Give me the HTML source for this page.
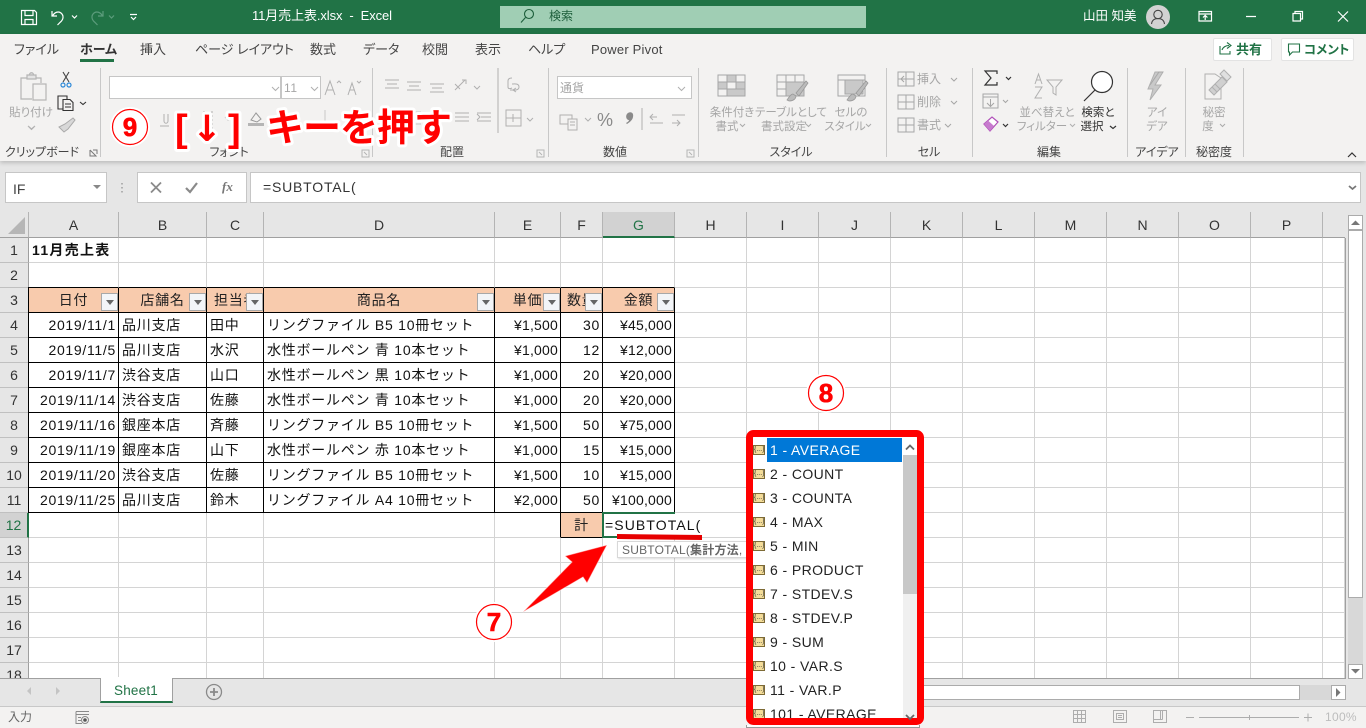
<!DOCTYPE html>
<html lang="ja"><head><meta charset="utf-8"><title>Excel</title>
<style>
html,body{margin:0;padding:0;width:1366px;height:728px;overflow:hidden;background:#e6e6e6}
*{box-sizing:border-box}
body{font-family:"Liberation Sans","Noto Sans CJK JP",sans-serif;position:relative}
.a{position:absolute}
.t{position:absolute;white-space:nowrap;line-height:16px;height:16px}
.c{transform:translateX(-50%);text-align:center}
.tab{font-size:13px;color:#444;top:42px;font-feature-settings:"palt"}
.g{font-size:12px;color:#444;top:144px;font-feature-settings:"palt"}
.d{font-size:11.5px;color:#a6a6a6;font-feature-settings:"palt"}
.sep{position:absolute;top:68px;width:1px;height:89px;background:#c8c8c8}
.hd{position:absolute;top:212px;height:26px;background:#e6e6e6;border-right:1px solid #b4b4b4;border-bottom:1px solid #a0a0a0;text-align:center;font-size:14px;line-height:26px;color:#333}
.rh{position:absolute;left:0;width:29px;height:25px;background:#e6e6e6;border-right:1px solid #9f9f9f;border-bottom:1px solid #c0c0c0;text-align:center;font-size:14px;line-height:25px;color:#333}
table{border-collapse:separate;border-spacing:0;table-layout:fixed;position:absolute;left:0;top:0;width:1316px}
td{height:25px;padding:0 2px 0 3px;border-right:1px solid #d4d4d4;border-bottom:1px solid #d4d4d4;font-size:14px;letter-spacing:.75px;color:#111;white-space:nowrap;overflow:hidden;line-height:23px;background:#fff}
td.b{border-color:#000}
td.bb{border-bottom-color:#000}
td.r{text-align:right;letter-spacing:.7px}
td.y{letter-spacing:.2px}
td.h{background:#f8cbad;text-align:center;color:#222;border-color:#000;padding:0 0 0 0}
.fb{position:absolute;width:17px;height:18px;top:293px;background:#f3f5f8;border:1px solid #a8a8a8}
.fb:after{content:"";position:absolute;left:4px;top:6px;border:4px solid transparent;border-top:5px solid #666;border-bottom:0}
.li{position:absolute;left:770px;font-size:14px;letter-spacing:.4px;color:#222;line-height:24px;height:24px;white-space:nowrap}
.ic{position:absolute;left:754px;width:12px;height:10px;background:#f4dc98;border:1px solid #7d6a35;font-size:7px;line-height:7px;text-align:center;color:#333;overflow:hidden}
</style></head><body>

<!-- title bar -->
<div class="a" style="left:0;top:0;width:1366px;height:34px;background:#217346"></div>
<div class="a" style="left:500px;top:6px;width:366px;height:22px;background:#a0ceb4"></div>
<div class="t" style="left:252px;top:8px;font-size:13px;color:#fff;letter-spacing:-.1px;white-space:pre">11月売上表.xlsx  -  Excel</div>
<div class="t" style="left:549px;top:8px;font-size:12px;color:#1d5e3b">検索</div>
<div class="t" style="left:1083px;top:8px;font-size:12.5px;color:#fff">山田 知美</div>

<!-- ribbon bg -->
<div class="a" style="left:0;top:34px;width:1366px;height:127px;background:#f3f2f1;box-shadow:0 2px 4px rgba(0,0,0,.18)"></div>
<div class="t tab" style="left:14px">ファイル</div>
<div class="t tab" style="left:80px;font-weight:700;color:#333">ホーム</div>
<div class="a" style="left:80px;top:59px;width:34px;height:3px;background:#217346"></div>
<div class="t tab" style="left:140px">挿入</div>
<div class="t tab" style="left:195px">ページ レイアウト</div>
<div class="t tab" style="left:310px">数式</div>
<div class="t tab" style="left:363px">データ</div>
<div class="t tab" style="left:422px">校閲</div>
<div class="t tab" style="left:475px">表示</div>
<div class="t tab" style="left:528px">ヘルプ</div>
<div class="t tab" style="left:591px;letter-spacing:.2px">Power Pivot</div>

<div class="a" style="left:1213px;top:38px;width:59px;height:23px;background:#fff;border:1px solid #e3e3e3;border-radius:2px"></div>
<div class="t" style="left:1236px;top:42px;font-size:13px;font-weight:700;color:#217346">共有</div>
<div class="a" style="left:1281px;top:38px;width:73px;height:23px;background:#fff;border:1px solid #e3e3e3;border-radius:2px"></div>
<div class="t" style="left:1304px;top:42px;font-size:12.5px;font-weight:700;color:#217346;font-feature-settings:'palt'">コメント</div>

<div class="sep" style="left:100px"></div><div class="sep" style="left:372px"></div><div class="sep" style="left:548px"></div><div class="sep" style="left:698px"></div><div class="sep" style="left:886px"></div><div class="sep" style="left:972px"></div><div class="sep" style="left:1127px"></div><div class="sep" style="left:1185px"></div><div class="sep" style="left:1243px"></div>

<div class="t g c" style="left:42px">クリップボード</div>
<div class="t g c" style="left:229px">フォント</div>
<div class="t g c" style="left:452px">配置</div>
<div class="t g c" style="left:615px">数値</div>
<div class="t g c" style="left:791px">スタイル</div>
<div class="t g c" style="left:929px">セル</div>
<div class="t g c" style="left:1049px">編集</div>
<div class="t g c" style="left:1157px">アイデア</div>
<div class="t g c" style="left:1214px">秘密度</div>

<div class="t d c" style="left:31px;top:105px">貼り付け</div>
<div class="a" style="left:109px;top:76px;width:172px;height:23px;background:#fff;border:1px solid #c6c6c6"></div>
<div class="a" style="left:281px;top:76px;width:40px;height:23px;background:#fff;border:1px solid #c6c6c6"></div>
<div class="t" style="left:284px;top:80px;font-size:12px;color:#a6a6a6;letter-spacing:.6px">11</div>
<div class="a" style="left:557px;top:76px;width:135px;height:23px;background:#fff;border:1px solid #c6c6c6"></div>
<div class="t" style="left:560px;top:80px;font-size:12px;color:#a6a6a6">通貨</div>
<div class="t" style="left:597px;top:110px;font-size:18px;color:#8a8a8a;line-height:20px;height:20px">%</div>

<div class="t d c" style="left:732px;top:105px">条件付き</div><div class="t d c" style="left:727px;top:119px">書式</div>
<div class="t d c" style="left:791px;top:105px">テーブルとして</div><div class="t d c" style="left:784px;top:119px">書式設定</div>
<div class="t d c" style="left:851px;top:105px">セルの</div><div class="t d c" style="left:845px;top:119px">スタイル</div>
<div class="t d" style="left:917px;top:71px;font-size:12px">挿入</div>
<div class="t d" style="left:917px;top:94px;font-size:12px">削除</div>
<div class="t d" style="left:917px;top:117px;font-size:12px">書式</div>
<div class="t d c" style="left:1047px;top:105px">並べ替えと</div><div class="t d c" style="left:1042px;top:119px">フィルター</div>
<div class="t d c" style="left:1098px;top:105px;color:#333">検索と</div><div class="t d c" style="left:1092px;top:119px;color:#333">選択</div>
<div class="t d c" style="left:1157px;top:105px">アイ</div><div class="t d c" style="left:1157px;top:119px">デア</div>
<div class="t d c" style="left:1214px;top:105px">秘密</div><div class="t d c" style="left:1208px;top:119px">度</div>

<!-- formula bar -->
<div class="a" style="left:5px;top:172px;width:102px;height:31px;background:#fff;border:1px solid #c6c6c6"></div>
<div class="t" style="left:13px;top:181px;font-size:14px;color:#444">IF</div>
<div class="a" style="left:137px;top:172px;width:110px;height:31px;background:#fff;border:1px solid #c6c6c6"></div>
<div class="a" style="left:250px;top:172px;width:1111px;height:31px;background:#fff;border:1px solid #c6c6c6"></div>
<div class="t" style="left:263px;top:179px;font-size:14px;color:#333;letter-spacing:.8px">=SUBTOTAL(</div>
<div class="t" style="left:222px;top:179px;font-family:'Liberation Serif',serif;font-style:italic;font-weight:700;font-size:13px;color:#777">fx</div>

<!-- column headers -->
<div class="a" style="left:0;top:212px;width:29px;height:26px;background:#e6e6e6;border-right:1px solid #b4b4b4;border-bottom:1px solid #a0a0a0"></div>
<div class="hd" style="left:29px;width:90px">A</div>
<div class="hd" style="left:119px;width:88px">B</div>
<div class="hd" style="left:207px;width:57px">C</div>
<div class="hd" style="left:264px;width:231px">D</div>
<div class="hd" style="left:495px;width:66px">E</div>
<div class="hd" style="left:561px;width:42px">F</div>
<div class="hd" style="left:603px;width:72px;background:#d2d2d2;border-bottom:2px solid #217346;color:#217346">G</div>
<div class="hd" style="left:675px;width:72px">H</div>
<div class="hd" style="left:747px;width:72px">I</div>
<div class="hd" style="left:819px;width:72px">J</div>
<div class="hd" style="left:891px;width:72px">K</div>
<div class="hd" style="left:963px;width:72px">L</div>
<div class="hd" style="left:1035px;width:72px">M</div>
<div class="hd" style="left:1107px;width:72px">N</div>
<div class="hd" style="left:1179px;width:72px">O</div>
<div class="hd" style="left:1251px;width:72px">P</div>
<div class="hd" style="left:1323px;width:22px;border-right:0"></div>

<!-- row headers -->
<div class="a" style="left:0;top:238px;width:29px;height:440px;overflow:hidden">
<div class="rh" style="top:0">1</div><div class="rh" style="top:25px">2</div><div class="rh" style="top:50px">3</div><div class="rh" style="top:75px">4</div><div class="rh" style="top:100px">5</div><div class="rh" style="top:125px">6</div><div class="rh" style="top:150px">7</div><div class="rh" style="top:175px">8</div><div class="rh" style="top:200px">9</div><div class="rh" style="top:225px">10</div><div class="rh" style="top:250px">11</div><div class="rh" style="top:275px;background:#d2d2d2;border-right:2px solid #217346;color:#217346">12</div><div class="rh" style="top:300px">13</div><div class="rh" style="top:325px">14</div><div class="rh" style="top:350px">15</div><div class="rh" style="top:375px">16</div><div class="rh" style="top:400px">17</div><div class="rh" style="top:425px">18</div>
</div>

<!-- grid -->
<div class="a" style="left:29px;top:238px;width:1317px;height:441px;overflow:hidden;background:#fff;border-right:1px solid #a0a0a0;border-bottom:1px solid #a0a0a0">
<table>
<colgroup><col style="width:90px"><col style="width:88px"><col style="width:57px"><col style="width:231px"><col style="width:66px"><col style="width:42px"><col style="width:72px"><col style="width:72px"><col style="width:72px"><col style="width:72px"><col style="width:72px"><col style="width:72px"><col style="width:72px"><col style="width:72px"><col style="width:72px"><col style="width:72px"><col style="width:22px"></colgroup>
<tr><td style="font-weight:700;letter-spacing:1.3px">11月売上表</td><td></td><td></td><td></td><td></td><td></td><td></td><td></td><td></td><td></td><td></td><td></td><td></td><td></td><td></td><td></td><td></td></tr>
<tr><td class="bb"></td><td class="bb"></td><td class="bb"></td><td class="bb"></td><td class="bb"></td><td class="bb"></td><td class="bb"></td><td></td><td></td><td></td><td></td><td></td><td></td><td></td><td></td><td></td><td></td></tr>
<tr><td class="h">日付</td><td class="h">店舗名</td><td class="h" style="text-align:left;padding-left:7px">担当者</td><td class="h">商品名</td><td class="h">単価</td><td class="h" style="text-align:left;padding-left:6px">数量</td><td class="h">金額</td><td></td><td></td><td></td><td></td><td></td><td></td><td></td><td></td><td></td><td></td></tr>
<tr><td class="b r">2019/11/1</td><td class="b">品川支店</td><td class="b">田中</td><td class="b">リングファイル B5 10冊セット</td><td class="b r y">¥1,500</td><td class="b r">30</td><td class="b r y">¥45,000</td><td></td><td></td><td></td><td></td><td></td><td></td><td></td><td></td><td></td><td></td></tr>
<tr><td class="b r">2019/11/5</td><td class="b">品川支店</td><td class="b">水沢</td><td class="b">水性ボールペン 青 10本セット</td><td class="b r y">¥1,000</td><td class="b r">12</td><td class="b r y">¥12,000</td><td></td><td></td><td></td><td></td><td></td><td></td><td></td><td></td><td></td><td></td></tr>
<tr><td class="b r">2019/11/7</td><td class="b">渋谷支店</td><td class="b">山口</td><td class="b">水性ボールペン 黒 10本セット</td><td class="b r y">¥1,000</td><td class="b r">20</td><td class="b r y">¥20,000</td><td></td><td></td><td></td><td></td><td></td><td></td><td></td><td></td><td></td><td></td></tr>
<tr><td class="b r">2019/11/14</td><td class="b">渋谷支店</td><td class="b">佐藤</td><td class="b">水性ボールペン 青 10本セット</td><td class="b r y">¥1,000</td><td class="b r">20</td><td class="b r y">¥20,000</td><td></td><td></td><td></td><td></td><td></td><td></td><td></td><td></td><td></td><td></td></tr>
<tr><td class="b r">2019/11/16</td><td class="b">銀座本店</td><td class="b">斉藤</td><td class="b">リングファイル B5 10冊セット</td><td class="b r y">¥1,500</td><td class="b r">50</td><td class="b r y">¥75,000</td><td></td><td></td><td></td><td></td><td></td><td></td><td></td><td></td><td></td><td></td></tr>
<tr><td class="b r">2019/11/19</td><td class="b">銀座本店</td><td class="b">山下</td><td class="b">水性ボールペン 赤 10本セット</td><td class="b r y">¥1,000</td><td class="b r">15</td><td class="b r y">¥15,000</td><td></td><td></td><td></td><td></td><td></td><td></td><td></td><td></td><td></td><td></td></tr>
<tr><td class="b r">2019/11/20</td><td class="b">渋谷支店</td><td class="b">佐藤</td><td class="b">リングファイル B5 10冊セット</td><td class="b r y">¥1,500</td><td class="b r">10</td><td class="b r y">¥15,000</td><td></td><td></td><td></td><td></td><td></td><td></td><td></td><td></td><td></td><td></td></tr>
<tr><td class="b r">2019/11/25</td><td class="b">品川支店</td><td class="b">鈴木</td><td class="b">リングファイル A4 10冊セット</td><td class="b r y">¥2,000</td><td class="b r">50</td><td class="b r y">¥100,000</td><td></td><td></td><td></td><td></td><td></td><td></td><td></td><td></td><td></td><td></td></tr>
<tr><td></td><td></td><td></td><td></td><td style="border-right-color:#000"></td><td class="h">計</td><td></td><td></td><td></td><td></td><td></td><td></td><td></td><td></td><td></td><td></td><td></td></tr>
<tr><td></td><td></td><td></td><td></td><td></td><td></td><td></td><td></td><td></td><td></td><td></td><td></td><td></td><td></td><td></td><td></td><td></td></tr>
<tr><td></td><td></td><td></td><td></td><td></td><td></td><td></td><td></td><td></td><td></td><td></td><td></td><td></td><td></td><td></td><td></td><td></td></tr>
<tr><td></td><td></td><td></td><td></td><td></td><td></td><td></td><td></td><td></td><td></td><td></td><td></td><td></td><td></td><td></td><td></td><td></td></tr>
<tr><td></td><td></td><td></td><td></td><td></td><td></td><td></td><td></td><td></td><td></td><td></td><td></td><td></td><td></td><td></td><td></td><td></td></tr>
<tr><td></td><td></td><td></td><td></td><td></td><td></td><td></td><td></td><td></td><td></td><td></td><td></td><td></td><td></td><td></td><td></td><td></td></tr>
<tr><td></td><td></td><td></td><td></td><td></td><td></td><td></td><td></td><td></td><td></td><td></td><td></td><td></td><td></td><td></td><td></td><td></td></tr>
</table>
</div>
<!-- left black edge of table -->
<div class="a" style="left:28px;top:287px;width:1px;height:226px;background:#000"></div>

<!-- filter buttons -->
<div class="fb" style="left:101px"></div><div class="fb" style="left:189px"></div><div class="fb" style="left:246px"></div><div class="fb" style="left:477px"></div><div class="fb" style="left:543px"></div><div class="fb" style="left:585px"></div><div class="fb" style="left:657px"></div>

<!-- active cell -->
<div class="a" style="left:603px;top:513px;width:100px;height:24px;background:#fff"></div>
<div class="a" style="left:602px;top:512px;width:73px;height:2px;background:#217346"></div>
<div class="a" style="left:602px;top:512px;width:2px;height:26px;background:#217346"></div>
<div class="a" style="left:602px;top:536px;width:15px;height:2px;background:#217346"></div>
<div class="t" style="left:605px;top:517px;font-size:14px;letter-spacing:1.1px;color:#111">=SUBTOTAL(</div>
<div class="a" style="left:617px;top:541px;width:135px;height:17px;background:#fff;border:1px solid #d8d8d8;box-shadow:1px 1px 2px rgba(0,0,0,.15);overflow:hidden"><span style="position:absolute;left:4px;top:-1px;font-size:12px;line-height:18px;color:#666;white-space:nowrap;letter-spacing:.2px">SUBTOTAL(<b>集計方法</b>,</span></div>

<!-- scrollbars + bottom -->
<div class="a" style="left:1346px;top:212px;width:20px;height:494px;background:#e6e6e6"></div>
<div class="a" style="left:1348px;top:230px;width:15px;height:368px;background:#fff;border:1px solid #ababab"></div>
<div class="a" style="left:1348px;top:598px;width:15px;height:66px;background:#d8d8d8"></div>
<div class="a" style="left:1348px;top:215px;width:15px;height:15px;background:#fff;border:1px solid #ababab"></div>
<div class="a" style="left:1348px;top:664px;width:15px;height:15px;background:#fff;border:1px solid #ababab"></div>

<div class="a" style="left:0;top:679px;width:1346px;height:27px;background:#e6e6e6"></div>
<div class="a" style="left:0;top:678px;width:1346px;height:1px;background:#a0a0a0"></div>
<div class="a" style="left:100px;top:678px;width:73px;height:25px;background:#fff;border-left:1px solid #a0a0a0;border-right:1px solid #a0a0a0;border-bottom:2px solid #217346"></div>
<div class="a" style="left:101px;top:677px;width:71px;height:2px;background:#fff"></div>
<div class="t" style="left:114px;top:683px;font-size:13.5px;color:#217346;letter-spacing:.2px">Sheet1</div>
<div class="a" style="left:760px;top:685px;width:540px;height:15px;background:#fff;border:1px solid #ababab"></div>
<div class="a" style="left:1300px;top:685px;width:31px;height:15px;background:#d8d8d8"></div>
<div class="a" style="left:1331px;top:685px;width:15px;height:15px;background:#fff;border:1px solid #ababab"></div>

<!-- status bar -->
<div class="a" style="left:0;top:706px;width:1366px;height:22px;background:#f3f2f1;border-top:1px solid #c8c8c8"></div>
<div class="t" style="left:8px;top:709px;font-size:12px;color:#666">入力</div>
<div class="t" style="left:1325px;top:709px;font-size:12px;color:#bdbdbd;letter-spacing:.3px">100%</div>

<!-- autocomplete list -->
<div class="a" style="left:746px;top:725px;width:174px;height:3px;background:#fff;border:1px solid #999;border-top:0"></div>
<div class="a" style="left:750px;top:434px;width:170px;height:290px;background:#fff;overflow:hidden">
  <div class="a" style="left:17px;top:4px;width:135px;height:24px;background:#0078d7"></div>
  <div class="a" style="left:153px;top:4px;width:14px;height:286px;background:#f0f0f0"></div>
  <div class="a" style="left:153px;top:21px;width:14px;height:139px;background:#c8c8c8"></div>
  <div class="a" style="left:153px;top:4px;width:14px;height:17px;background:#fff"></div>
</div>
<div class="a" style="left:750px;top:434px;width:170px;height:290px;overflow:hidden">
  <div class="li" style="left:20px;top:4px;color:#fff">1 - AVERAGE</div>
  <div class="li" style="left:20px;top:28px">2 - COUNT</div>
  <div class="li" style="left:20px;top:52px">3 - COUNTA</div>
  <div class="li" style="left:20px;top:76px">4 - MAX</div>
  <div class="li" style="left:20px;top:100px">5 - MIN</div>
  <div class="li" style="left:20px;top:124px">6 - PRODUCT</div>
  <div class="li" style="left:20px;top:148px">7 - STDEV.S</div>
  <div class="li" style="left:20px;top:172px">8 - STDEV.P</div>
  <div class="li" style="left:20px;top:196px">9 - SUM</div>
  <div class="li" style="left:20px;top:220px">10 - VAR.S</div>
  <div class="li" style="left:20px;top:244px">11 - VAR.P</div>
  <div class="li" style="left:20px;top:268px">101 - AVERAGE</div>
  <div class="ic" style="left:3px;top:11px">{...}</div><div class="ic" style="left:3px;top:35px">{...}</div><div class="ic" style="left:3px;top:59px">{...}</div><div class="ic" style="left:3px;top:83px">{...}</div><div class="ic" style="left:3px;top:107px">{...}</div><div class="ic" style="left:3px;top:131px">{...}</div><div class="ic" style="left:3px;top:155px">{...}</div><div class="ic" style="left:3px;top:179px">{...}</div><div class="ic" style="left:3px;top:203px">{...}</div><div class="ic" style="left:3px;top:227px">{...}</div><div class="ic" style="left:3px;top:251px">{...}</div><div class="ic" style="left:3px;top:275px">{...}</div>
</div>

<!-- icons + annotations -->
<svg class="a" style="left:0;top:0" width="1366" height="728" viewBox="0 0 1366 728" fill="none">
<!-- title icons -->
<g stroke="#fff" stroke-width="1.2">
<path d="M21.500 10.500h13l2 2v12h-15z"/><path d="M25 10.500v5h8v-5M25 24.500v-5h8v5"/>
<path d="M52 11v5h5M52.500 16c2-4 6-5 8.500-3 3 2.500 2.500 6.500-.5 9l-3 3"/>
<path d="M72 15.500l2.500 2.500 2.500-2.500"/>
<path d="M130 14.500h7M131 17l2.500 2.500 2.500-2.500"/>
<path d="M1199 11.500h12.500v9.500h-12.500zM1199 14h12.500M1205.200 20v-4M1203 17.500l2.200-2.200 2.200 2.200"/>
<path d="M1246 16.500h10M1293 13.500h7.500v7.500h-7.500zM1295 13.500v-2h7.500v7.500h-2"/>
<path d="M1338 11.500l10 10M1348 11.500l-10 10"/>
</g>
<g stroke="#5c9c7c" stroke-width="1.2"><path d="M103 11v5h-5M102.500 16c-2-4-6-5-8.500-3-3 2.500-2.500 6.500.5 9l3 3"/><path d="M109 15.500l2.500 2.500 2.500-2.500"/></g>
<g stroke="#1d5e3b" stroke-width="1.100"><circle cx="529" cy="14" r="4.500"/><path d="M525.500 17.500l-4.500 5"/></g>
<circle cx="1158" cy="17" r="12" fill="#d2d2d2"/>
<g stroke="#444" stroke-width="1.100"><circle cx="1158" cy="14.500" r="4.200"/><path d="M1151.500 24c.5-4 3-5.500 6.500-5.500s6 1.500 6.500 5.500"/></g>
<g stroke="#217346" stroke-width="1.100"><path d="M1220 46v8h10v-3M1222 50c1-3 4-4.500 7-4.500M1227 42.500l4 3-4 3"/><path d="M1288.500 44h11v8h-7l-3 3v-3h-1z"/></g>

<!-- clipboard -->
<g stroke="#b5b5b5" stroke-width="1.200">
<path d="M28 78h-7v21h11M36 78h5v5"/><path d="M27 75h9v4h-9zM29.500 75c0-3 4-3 4 0" fill="#e4e4e4"/>
<rect x="33" y="84" width="13" height="16" fill="#f3f2f1"/>
<path d="M28 126l3.500 3 3.500-3"/>
</g>
<g stroke="#444" stroke-width="1.100"><path d="M63 72l6 10M69 72l-6 10"/></g>
<circle cx="63" cy="85" r="2" stroke="#2b88d8" stroke-width="1.200"/><circle cx="69" cy="85" r="2" stroke="#2b88d8" stroke-width="1.200"/>
<g stroke="#333" stroke-width="1.100">
<path d="M63 109h-5V96h9v3"/><path d="M63 99.500h7l3 3v8h-10z"/><path d="M65 104h6M65 107h6"/>
<path d="M80 102l3 2.500 3-2.500"/>
</g>
<path d="M59 127l5 5 4-3 7-9-2-2-8 6z" stroke="#aaa" fill="#d8d8d8"/>
<path d="M90 150v6h6l-6-6M93 150h4v4" stroke="#777"/><path d="M362 150h7v7h-7zM364 152l3 3" stroke="#b5b5b5"/><path d="M537 150h7v7h-7zM539 152l3 3" stroke="#b5b5b5"/><path d="M687 150h7v7h-7zM689 152l3 3" stroke="#b5b5b5"/>

<!-- font box -->
<g stroke="#b0b0b0" stroke-width="1">
<path d="M272 87l3.500 3.500 3.500-3.500M311 87l3.500 3.500 3.500-3.500"/>
<path d="M325 95l5-14 5 14M327 90h6M337 83l2-2 2 2M348 95l4-12 4 12M349.500 90h5M357 81l2 2 2-2"/>
<path d="M160 126h9M164 114v7c0 3 4 3 4 0v-7" />
<path d="M204 111v18M212 111v18" stroke-dasharray="2 2"/>
<path d="M225 117l3 3 3-3"/>
</g>
<rect x="248" y="123" width="16" height="3" fill="#b5b5b5"/><path d="M251 120l5-7 5 6-4 3z" stroke="#999"/>
<path d="M325 110v15M384 112h14M384 118h14M384 124h14M407 112h14M407 118h14M407 124h14" stroke="#c8c8c8"/>
<!-- align -->
<g stroke="#b0b0b0" stroke-width="1">
<path d="M385 80h14M387 84h10M385 88h14M407 82h14M409 86h10M407 90h14M430 84h14M432 88h10M430 92h14"/>
<path d="M455 90l10-10M462 80h4v4M455 84l5 5" />
<path d="M474 86l3 3 3-3"/>
<path d="M455 113h14M455 117h14M455 121h14M477 113h14M481 117h10M477 121h14M477 114l3 3-3 3"/>
<path d="M498 68v65"/>
<path d="M512 78c-3 0-4 1-4 3v6c0 2 2 2 4 1M510 90c3 0 9 1 9-3s-5-3-7-3M516 92l-3-2 3-2" />
<rect x="506" y="110" width="15" height="16"/><path d="M506 118h15M510 118h7M513 114v8"/><path d="M527 118l3 3 3-3"/>
</g>
<path d="M678 87l3.500 3.500 3.500-3.500" stroke="#b0b0b0"/>
<g stroke="#b0b0b0" stroke-width="1"><rect x="560" y="115" width="12" height="9"/><rect x="568" y="119" width="9" height="11" fill="#f3f2f1"/><path d="M570 122h5M570 125h5M585 118l3 3 3-3M642 108v22"/>
<path d="M650 117h7M653 114l-3 3 3 3M650 123h13M672 123h8M677 120l3 3-3 3M672 115h13"/></g>
<path d="M628 113c3-2 6 0 5 4-.5 3-3 5-6 7l-1-1c2-1 3-2 3-3-3 0-4-5-1-7z" fill="#8a8a8a"/>
<!-- style icons -->
<g stroke="#a6a6a6" stroke-width="1">
<rect x="718" y="75" width="27" height="21" fill="#f3f2f1"/><path d="M718 82h27M718 89h27M727 75v21M736 75v21"/>
<rect x="727" y="75" width="9" height="7" fill="#c9c9c9"/><rect x="718" y="82" width="9" height="7" fill="#c9c9c9"/><rect x="736" y="82" width="9" height="7" fill="#c9c9c9"/><rect x="727" y="89" width="18" height="7" fill="#c9c9c9"/>
<rect x="777" y="75" width="27" height="21"/><path d="M777 82h27M777 89h27M786 75v21M795 75v21"/><rect x="786" y="82" width="18" height="14" fill="#c9c9c9"/>
<rect x="838" y="75" width="27" height="21"/><path d="M838 80h27"/><rect x="845" y="80" width="18" height="14" fill="#c9c9c9"/>
</g>
<path d="M787 100c2-3 4-6 6-6l3 2c0 3-3 5-7 5zM796 93l10-12 2 2-9 13zM847 100c2-3 4-6 6-6l3 2c0 3-3 5-7 5zM856 93l10-12 2 2-9 13z" fill="#bbb" stroke="#999" stroke-width=".8"/>
<path d="M740 124l2.500 2.500 2.500-2.500M806 124l2.500 2.500 2.500-2.500M866 124l2.500 2.500 2.500-2.500" stroke="#aaa"/>
<!-- cell icons -->
<g stroke="#a6a6a6" stroke-width="1">
<rect x="898" y="72" width="16" height="14"/><path d="M898 79h16M906 72v14M901 79l3-3M901 79l3 3"/>
<rect x="898" y="95" width="16" height="14"/><path d="M898 102h16M906 95v14"/>
<rect x="898" y="118" width="16" height="14"/><path d="M898 125h16M906 118v14"/>
<path d="M951 78l3 3 3-3M951 101l3 3 3-3M945 124l3 3 3-3"/>
</g>
<!-- edit -->
<path d="M997 74v-3h-12l6 7-6 7h12v-3" stroke="#333" stroke-width="1.200"/>
<path d="M1006 77l2.500 2.500 2.500-2.500M1003 124l2.500 2.500 2.500-2.500" stroke="#333" stroke-width="1.200"/>
<g stroke="#a6a6a6" stroke-width="1"><rect x="983" y="94" width="15" height="14"/><path d="M983 97h15M990.500 99v7M987 103l3.500 3.500 3.500-3.500M1003 100l2.500 2.500 2.500-2.500"/></g>
<path d="M984 124l8-7 6 5-8 9z" fill="#fff" stroke="#b04fb8" stroke-width="1.200"/><path d="M984 124l4-3.500 6 5.500-4 5z" fill="#c77bce"/>
<g stroke="#b0b0b0" stroke-width="1"><path d="M1035 84l3.500-10 3.500 10M1036 80h5M1035 87h7l-7 11h7"/><path d="M1047 80h15l-6 7v8l-3-2v-6z"/><path d="M1070 124l2.500 2.500 2.500-2.500"/></g>
<g stroke="#333" stroke-width="1.200"><circle cx="1102" cy="82" r="10.500" fill="#fff"/><path d="M1095 90l-11 11"/><path d="M1110 126l3 2.500 3-2.500"/></g>
<path d="M1163 72l-8 13h6l-11 15 3-11h-5l7-17z" fill="#c9c9c9" stroke="#b0b0b0"/><path d="M1150 85l9-13h4" stroke="#a8a8a8"/>
<g stroke="#b0b0b0"><path d="M1205 74h10l6 4v21h-16z"/><path d="M1209 90l13-13 5 5-13 13z" fill="#d0d0d0"/><path d="M1212 87l5 5M1215 84l5 5"/><path d="M1220 74l4-4 7 7-4 4z" fill="#e0e0e0"/></g>
<path d="M1220 124l2.500 2.500 2.500-2.500" stroke="#aaa"/>
<path d="M1348 157l4-4 4 4" stroke="#333" stroke-width="1.200"/>
<path d="M29 127l2.500 2.500 2.500-2.500" stroke="#b0b0b0"/>

<!-- formula bar icons -->
<path d="M93 185h8l-4 4z" fill="#888"/>
<path d="M122 183v1.500M122 187v1.500M122 191v1.500" stroke="#b0b0b0" stroke-width="2"/>
<path d="M151 182.500l10 10M161 182.500l-10 10" stroke="#8a8a8a" stroke-width="1.800"/>
<path d="M186 188l4 4 7-9" stroke="#8a8a8a" stroke-width="2.200"/>
<path d="M1349 186l3.500 3 3.500-3" stroke="#777" stroke-width="1.800"/>
<!-- sheet corner -->
<path d="M25 217v17H8z" fill="#b6b6b6"/>
<!-- scroll arrows -->
<path d="M1351 225l4.500-4.500 4.500 4.500z" fill="#777"/><path d="M1351 669h9l-4.500 4.500z" fill="#777"/>
<path d="M1336 688v9l4.500-4.500z" fill="#777"/>
<path d="M31 687v8l-4-4zM56 687v8l4-4z" fill="#c4c4c4"/>
<circle cx="214" cy="692" r="7.500" stroke="#8a8a8a" stroke-width="1.300"/><path d="M214 688v8M210 692h8" stroke="#8a8a8a" stroke-width="1.800"/>
<!-- status icons -->
<g stroke="#8a8a8a"><path d="M76 711.500h13M76 714.500h13M76 711.500v12h6M78 717.500h3M78 720.500h3"/><circle cx="85" cy="720" r="3.500"/></g><circle cx="85" cy="720" r="1.800" fill="#555"/>
<g stroke="#adadad"><rect x="1073.500" y="710.500" width="12" height="12"/><path d="M1077.500 710.500v12M1081.500 710.500v12M1073.500 714.500h12M1073.500 718.500h12"/><rect x="1113.500" y="710.500" width="13" height="12"/><path d="M1116.500 713.500h7v6h-7zM1118 715.500h4M1118 717.500h4"/><path d="M1153.500 710.500h13v12h-13zM1153.500 719.500h9M1160.500 710.500v9M1162.500 710.500v9"/><path d="M1186 717.500h8M1199 717.500h100M1249.500 715v5M1304 717.500h8M1308 713.500v8"/></g>

<!-- red box -->
<rect x="749.500" y="433.500" width="171" height="288" rx="4" stroke="#f00" stroke-width="7"/>
<path d="M906 449.500l4-4 4 4" stroke="#666" stroke-width="1.800"/>
<path d="M906 715l4 4 4-4" stroke="#666" stroke-width="1.800"/>
<!-- red underline -->
<path d="M617 534l85 1v5l-85-1z" fill="#e60000"/>
<!-- arrow -->
<path d="M523 612L572 562 565 556 607 545 587 583 583 577z" fill="#f00" stroke="#fff" stroke-opacity=".5" stroke-width="1"/>
<!-- circled numbers -->
<g style="font-family:'Liberation Sans','Noto Sans CJK JP',sans-serif;font-weight:700" text-anchor="middle">
<circle cx="494" cy="622" r="20" fill="#fff"/><circle cx="494" cy="622" r="17.500" stroke="#f00" stroke-width="1.200"/><text x="494" y="631" font-size="26" fill="#f00" stroke="#f00" stroke-width=".6">7</text>
<circle cx="826" cy="393" r="20" fill="#fff"/><circle cx="826" cy="393" r="17.500" stroke="#f00" stroke-width="1.200"/><text x="826" y="402" font-size="26" fill="#f00" stroke="#f00" stroke-width=".6">8</text>
<circle cx="130" cy="127" r="20" fill="#fff"/><circle cx="130" cy="127" r="17.500" stroke="#f00" stroke-width="1.200"/><text x="130" y="136" font-size="26" fill="#f00" stroke="#f00" stroke-width=".6">9</text>
</g>
<g style="font-family:'Liberation Sans','Noto Sans CJK JP',sans-serif;font-weight:700;paint-order:stroke" fill="#f00" stroke="#fff" stroke-width="6" stroke-linejoin="round">
<text x="175" y="141" font-size="38">[</text>
<text x="207" y="141" font-size="36" text-anchor="middle" style="font-family:'DejaVu Sans',sans-serif">↓</text>
<text x="228" y="141" font-size="38">]</text>
<text x="266" y="141" font-size="38" textLength="186">キーを押す</text>
</g>
</svg>
</body></html>
